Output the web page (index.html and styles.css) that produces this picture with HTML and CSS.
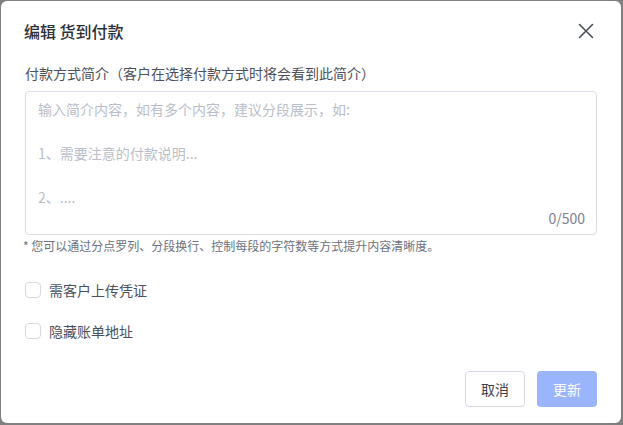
FILE: index.html
```html
<!DOCTYPE html>
<html lang="zh">
<head>
<meta charset="utf-8">
<link rel="stylesheet" href="styles.css">
</head>
<body>
<div class="dialog">
  <div class="header">
    <div class="title">编辑 货到付款</div>
    <button class="close" aria-label="关闭">
      <svg width="16" height="16" viewBox="0 0 16 16"><path d="M1.5 1.5 L14.5 14.5 M14.5 1.5 L1.5 14.5" stroke="#4a4f5c" stroke-width="1.6" stroke-linecap="round" fill="none"/></svg>
    </button>
  </div>
  <div class="body">
    <div class="label">付款方式简介（客户在选择付款方式时将会看到此简介）</div>
    <div class="textarea">
      <div class="placeholder">输入简介内容，如有多个内容，建议分段展示，如:<br><br>1、需要注意的付款说明...<br><br>2、....</div>
      <div class="counter">0/500</div>
    </div>
    <div class="hint">* 您可以通过分点罗列、分段换行、控制每段的字符数等方式提升内容清晰度。</div>
    <label class="check"><span class="box"></span><span>需客户上传凭证</span></label>
    <label class="check"><span class="box"></span><span>隐藏账单地址</span></label>
  </div>
  <div class="footer">
    <button class="btn btn-cancel">取消</button>
    <button class="btn btn-primary">更新</button>
  </div>
</div>
</body>
</html>
```
FILE: styles.css
```css
* { box-sizing: border-box; }
html, body { margin: 0; padding: 0; }
body {
  background: #808080;
  width: 623px;
  height: 425px;
  padding: 1px 2px 2px 1px;
  font-family: "Noto Sans CJK SC", "Noto Sans", sans-serif;
}
.dialog {
  width: 620px;
  height: 422px;
  background: #fff;
  border-radius: 6px;
  display: flex;
  flex-direction: column;
}
.header {
  height: 60px;
  display: flex;
  align-items: center;
  justify-content: space-between;
  padding: 0 23px 0 23px;
}
.title {
  font-size: 16px;
  font-weight: 500;
  color: #2b2f36;
  line-height: 22px;
}
.close {
  border: 0;
  background: none;
  padding: 0;
  width: 24px;
  height: 24px;
  display: flex;
  align-items: center;
  justify-content: center;
}
.body {
  padding: 0 24px 0 24px;
}
.label {
  margin-top: 2px;
  font-size: 14px;
  line-height: 20px;
  color: #4b505c;
}
.textarea {
  margin-top: 8px;
  height: 144px;
  border: 1px solid #d9dde6;
  border-radius: 4px;
  padding: 6px 11px 0 12px;
  display: flex;
  flex-direction: column;
}
.placeholder {
  font-size: 14px;
  line-height: 22px;
  color: #b9bec9;
  flex: 1;
}
.counter {
  text-align: right;
  font-size: 14px;
  line-height: 20px;
  color: #7b8090;
  margin-bottom: 7px;
}
.hint {
  margin-top: 2px;
  margin-left: -2px;
  font-size: 12px;
  line-height: 18px;
  color: #6c717d;
}
.check {
  display: flex;
  align-items: center;
  gap: 8px;
  height: 20px;
  font-size: 14px;
  color: #4b505c;
  margin-top: 25px;
}
.check + .check {
  margin-top: 21px;
}
.box {
  width: 16px;
  height: 16px;
  border: 1px solid #d5d9e3;
  border-radius: 4px;
  background: #fff;
}
.footer {
  margin-top: auto;
  display: flex;
  justify-content: flex-end;
  gap: 12px;
  padding: 0 24px 16px 0;
}
.btn {
  height: 36px;
  width: 60px;
  border-radius: 4px;
  font-family: inherit;
  font-size: 14px;
  padding: 0;
}
.btn-cancel {
  background: #fff;
  border: 1px solid #d5d9e3;
  color: #3c404a;
}
.btn-primary {
  background: #9bb5fd;
  border: 0;
  color: #fff;
}
```
